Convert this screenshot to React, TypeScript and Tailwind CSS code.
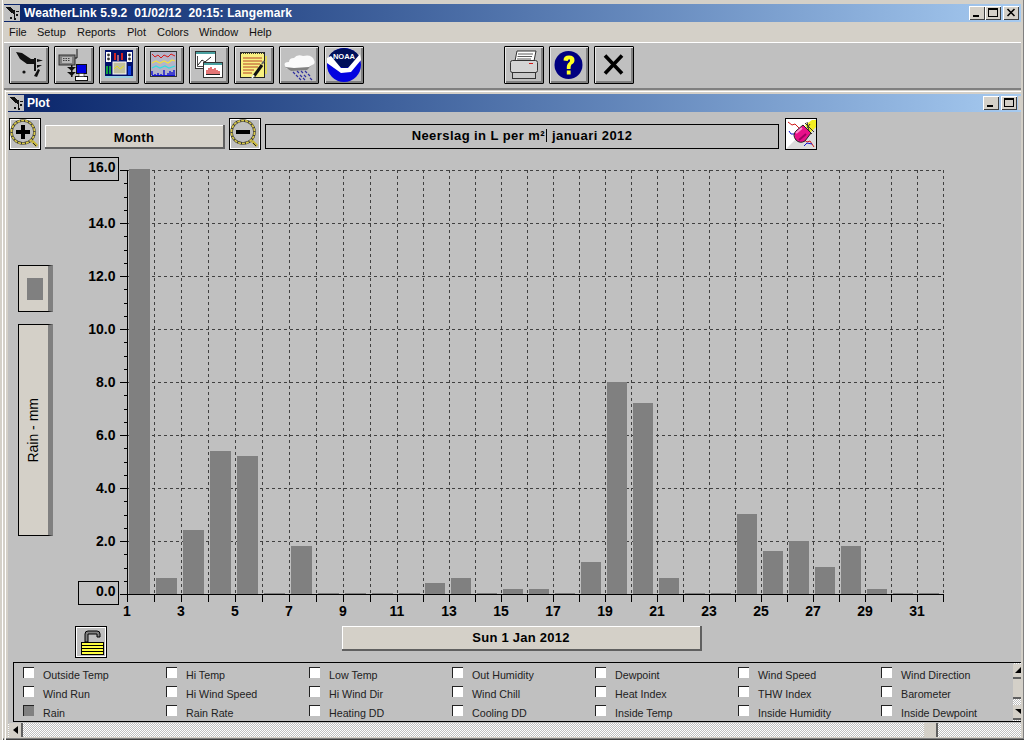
import React from "react";

const LEFT_BAR = [16.04,0.6,2.4,5.4,5.2,0,1.8,0,0,0,0,0.4,0.6,0,0.2,0.2,0,1.2,8,7.2,0.6,0,0,3.02,1.62,2,1.02,1.8,0.2,0,0];
const tick = (d: number) => (d <= 11 ? 127 + 27 * (d - 1) : 397 + 26 * (d - 11));
const yv = (v: number) => Math.round(594 - v * 26.5);

function Vane() {
  return (
    <svg viewBox="0 0 16 16" className="w-[16px] h-[16px] bg-[#c0c0c0]" shapeRendering="crispEdges">
      <polygon points="2,2 6,2 11,6 11,9 7,8" fill="#111" />
      <rect x="10" y="5" width="1" height="8" fill="#111" />
      <rect x="12" y="6" width="3" height="1" fill="#111" />
      <rect x="12" y="9" width="2" height="2" fill="#111" />
      <rect x="6" y="12" width="2" height="2" fill="#111" />
      <rect x="10" y="13" width="2" height="2" fill="#111" />
    </svg>
  );
}

function ToolBtn({ children }: { children: React.ReactNode }) {
  return (
    <div className="w-[40px] h-[38px] shrink-0 bg-[#c0c0c0] border border-black rounded-[1px] shadow-[inset_1px_1px_0_#e8e8e8,inset_-2px_-2px_0_#808080]">
      <svg viewBox="1 1 38 36" className="w-[38px] h-[36px]">{children}</svg>
    </div>
  );
}

function WinBtn({ kind }: { kind: "min" | "max" | "close" }) {
  return (
    <div className="w-[16px] h-[14px] bg-[#d4d0c8] shadow-[inset_1px_1px_0_#fff,inset_-1px_-1px_0_#404040]">
      <svg viewBox="0 0 16 14" className="w-[16px] h-[14px]" shapeRendering="crispEdges">
        {kind === "min" && <rect x="4" y="9" width="6" height="2" fill="#000" />}
        {kind === "max" && (
          <>
            <rect x="3.5" y="2.5" width="9" height="8" fill="none" stroke="#000" />
            <rect x="3" y="2" width="10" height="2" fill="#000" />
          </>
        )}
        {kind === "close" && (
          <path d="M4.5 3 L11.5 10 M11.5 3 L4.5 10" stroke="#000" strokeWidth="1.6" shapeRendering="auto" />
        )}
      </svg>
    </div>
  );
}

function Magnifier({ minus }: { minus?: boolean }) {
  return (
    <div className="w-[32px] h-[32px] shrink-0 border border-black shadow-[inset_1px_1px_0_#fff,inset_-1px_-1px_0_#fff] bg-[#c0c0c0]">
      <svg viewBox="0 0 30 30" className="w-[30px] h-[30px]">
        <circle cx="13" cy="13" r="11.5" fill="#c0c0c0" stroke="#333" strokeWidth="2.6" />
        <circle cx="13" cy="13" r="11.5" fill="none" stroke="#d8c848" strokeWidth="1.7" strokeDasharray="3 1" />
        <rect x="6" y="11" width="14" height="4" fill="#000" />
        {!minus && <rect x="11" y="6" width="4" height="14" fill="#000" />}
        <path d="M22 22 L27 27" stroke="#c8b838" strokeWidth="3" />
        <path d="M23 24 L26 27" stroke="#222" strokeWidth="1" />
      </svg>
    </div>
  );
}

function Eraser() {
  return (
    <div className="w-[32px] h-[32px] shrink-0 border border-black bg-white">
      <svg viewBox="0 0 30 30" className="w-[30px] h-[30px]">
        <polygon points="0,0 30,0 0,30" fill="#fff" />
        <polygon points="30,0 30,30 0,30" fill="#dcdcdc" />
        <path d="M2 3 L6 6 L9 5 L14 10 M17 20 L21 23 L24 22 L28 28" fill="none" stroke="#d01818" strokeWidth="1" />
        <path d="M3 12 L5 15 L9 15 M18 27 L21 24 L26 25" fill="none" stroke="#1010d0" strokeWidth="1" />
        <polygon points="19,6 26,1 30,1 30,8 24,14" fill="#f4ee20" />
        <path d="M17 6 L26 15 M19 4 L28 13 M21 3 L23 12 M24 5 L21 9" stroke="#333" strokeWidth="1" />
        <path d="M10 12 L17 6 L25 14 L19 22 Q14 25 10 21 Q6 16 10 12 Z" fill="#e8108a" stroke="#222" strokeWidth="1" />
        <path d="M10 14 L16 9" stroke="#ff90d0" strokeWidth="2" />
        <path d="M13 21 L20 15" stroke="#a00060" strokeWidth="2" />
      </svg>
    </div>
  );
}

function Lock() {
  return (
    <div className="w-[32px] h-[32px] border border-black bg-[#c0c0c0] shadow-[inset_1px_1px_0_#fff,inset_-1px_-1px_0_#fff]">
      <svg viewBox="0 0 30 30" className="w-[30px] h-[30px]" shapeRendering="crispEdges">
        <path d="M9 15 V7 Q9 4 12 4 H21 Q24 4 24 7 V10 H21 V7 H12 V15 Z" fill="#808080" stroke="#000" strokeWidth="1" shapeRendering="auto" />
        <rect x="5.5" y="15.5" width="22" height="12" fill="#ffff40" stroke="#000" />
        <rect x="6" y="18" width="21" height="1" fill="#000" />
        <rect x="6" y="21" width="21" height="1" fill="#000" />
        <rect x="6" y="24" width="21" height="1" fill="#000" />
      </svg>
    </div>
  );
}

function Tri({ dir }: { dir: "up" | "down" | "left" }) {
  const pts = dir === "up" ? "0,6 6,6 6,0" : dir === "down" ? "0,1 6,1 6,6" : "6,0 6,8 1,4";
  return (
    <svg viewBox="0 0 6 8" className="w-[6px] h-[8px] shrink-0">
      <polygon points={pts} fill="#000" />
    </svg>
  );
}

const menus: [string, string][] = [
  ["File", "w-[28px]"],
  ["Setup", "w-[40px]"],
  ["Reports", "w-[50px]"],
  ["Plot", "w-[30px]"],
  ["Colors", "w-[42px]"],
  ["Window", "w-[50px]"],
  ["Help", "w-[30px]"],
];

const legend = [
  "Outside Temp", "Hi Temp", "Low Temp", "Out Humidity", "Dewpoint", "Wind Speed", "Wind Direction",
  "Wind Run", "Hi Wind Speed", "Hi Wind Dir", "Wind Chill", "Heat Index", "THW Index", "Barometer",
  "Rain", "Rain Rate", "Heating DD", "Cooling DD", "Inside Temp", "Inside Humidity", "Inside Dewpoint",
];

function Chart() {
  const days = Array.from({ length: 32 }, (_, i) => i + 1);
  const majors = [0, 2, 4, 6, 8, 10, 12, 14, 16];
  const minors = Array.from({ length: 33 }, (_, i) => i * 0.5);
  return (
    <svg viewBox="60 150 900 476" className="w-[900px] h-[476px] block" style={{ fontFamily: "'Liberation Sans', sans-serif" }}>
      <g shapeRendering="crispEdges" stroke="#404040" strokeWidth="1" strokeDasharray="3 3">
        {days.slice(1).map((d) => (
          <line key={d} x1={tick(d) + 0.5} x2={tick(d) + 0.5} y1={170} y2={594} />
        ))}
        {majors.slice(1).map((v) => (
          <line key={v} x1={128} x2={943} y1={yv(v) + 0.5} y2={yv(v) + 0.5} />
        ))}
      </g>
      <g shapeRendering="crispEdges" fill="#808080">
        {LEFT_BAR.map((v, i) => {
          const d = i + 1;
          const top = v === 0 ? 593 : yv(v);
          return <rect key={d} x={tick(d) + 2} y={top} width={d <= 11 ? 21 : 20} height={594 - top} />;
        })}
      </g>
      <g shapeRendering="crispEdges" stroke="#000" strokeWidth="1">
        <line x1={127.5} x2={127.5} y1={170} y2={595} />
        <line x1={120} x2={944} y1={594.5} y2={594.5} />
        {minors.map((v) => (
          <line key={v} x1={v % 2 === 0 ? 120 : 124} x2={128} y1={yv(v) + 0.5} y2={yv(v) + 0.5} />
        ))}
        {days.map((d) => (
          <line key={d} x1={tick(d) + 0.5} x2={tick(d) + 0.5} y1={594} y2={602} />
        ))}
        <rect x={70.5} y={157.5} width={48} height={23} fill="none" />
        <rect x={78.5} y={581.5} width={40} height={23} fill="none" />
      </g>
      <g fontSize="14" fontWeight="700" fill="#000">
        {majors.map((v) => (
          <text key={v} x={115.5} y={v === 16 ? 172 : v === 0 ? 596 : yv(v) + 5} textAnchor="end">
            {v.toFixed(1)}
          </text>
        ))}
        {days.filter((d) => d % 2 === 1).map((d) => (
          <text key={d} x={tick(d)} y={616} textAnchor="middle">
            {d}
          </text>
        ))}
      </g>
    </svg>
  );
}

export default function App() {
  return (
    <div className="relative w-[1024px] h-[740px] overflow-hidden bg-[#d4d0c8] flex flex-col pt-[4px] pl-[4px] pr-[3px] font-['Liberation_Sans',sans-serif] text-black shadow-[inset_2px_0_0_#d4d0c8,inset_3px_0_0_#fff,inset_0_-1px_0_#404040,inset_0_-2px_0_#808080,inset_-1px_0_0_#808080]">
      {/* Title bar */}
      <div className="h-[18px] shrink-0 flex items-center bg-gradient-to-r from-[#0a246a] to-[#a6caf0] pr-[2px]">
        <Vane />
        <div className="ml-[4px] flex-1 text-white font-bold text-[12px] tracking-[0.09px] whitespace-pre leading-none">WeatherLink 5.9.2  01/02/12  20:15: Langemark</div>
        <WinBtn kind="min" />
        <WinBtn kind="max" />
        <div className="ml-[2px]"><WinBtn kind="close" /></div>
      </div>
      {/* Menu */}
      <div className="h-[20px] shrink-0 flex items-center pl-[5px] text-[11px] text-[#111]">
        {menus.map(([m, w]) => (
          <div key={m} className={w}>{m}</div>
        ))}
      </div>
      {/* Toolbar */}
      <div className="h-[46px] shrink-0 border-t border-white bg-[#c0c0c0] pt-[3px] pl-[5px] flex gap-[5px]">
        <ToolBtn>
          <polygon points="7,6 13,7 22,13 26,13 26,18 18,18 11,13" fill="#111" />
          <rect x="25" y="12" width="2" height="13" fill="#111" />
          <polygon points="28,13 34,14.5 28,16" fill="#111" />
          <polygon points="28,19 33,19 28,22" fill="#111" />
          <circle cx="15" cy="26" r="1.6" fill="#111" />
          <polygon points="25,30 29,23 31,24 28,31" fill="#111" />
        </ToolBtn>
        <ToolBtn>
          <rect x="5" y="9" width="16" height="10" fill="#808080" stroke="#333" />
          <rect x="8" y="11" width="10" height="6" fill="#b8b8b8" />
          <path d="M9 12.5 H16 M9 14.5 H16" stroke="#222" strokeWidth="0.8" strokeDasharray="1.5 1" />
          <path d="M21 12 H23 V3" fill="none" stroke="#111" />
          <rect x="17" y="19" width="1.5" height="12" fill="#111" />
          <polygon points="13,21 22,21 17.7,25" fill="#111" />
          <polygon points="13,26 22,26 17.7,30" fill="#111" />
          <rect x="22.5" y="18.5" width="10" height="9" fill="#0000e0" stroke="#111" />
          <rect x="21.5" y="30.5" width="12" height="4" fill="#fff" stroke="#111" />
          <rect x="25" y="27.5" width="5" height="3" fill="#fff" stroke="#111" strokeWidth="0.6" />
        </ToolBtn>
        <ToolBtn>
          <rect x="6" y="4" width="28" height="28" fill="#00106a" />
          <rect x="7" y="6" width="5" height="10" fill="#fff" />
          <circle cx="9.5" cy="9" r="1.4" fill="#333" />
          <circle cx="9.5" cy="13" r="1.4" fill="#333" />
          <rect x="28" y="6" width="5" height="10" fill="#fff" />
          <circle cx="30.5" cy="9" r="1.4" fill="#333" />
          <circle cx="30.5" cy="13" r="1.4" fill="#333" />
          <rect x="15" y="7" width="2" height="7" fill="#d02020" />
          <rect x="18" y="9" width="2" height="6" fill="#a06080" />
          <rect x="22" y="7" width="2" height="7" fill="#d02020" />
          <rect x="7" y="20" width="2" height="8" fill="#10a040" />
          <rect x="10" y="20" width="2" height="8" fill="#10a040" />
          <rect x="29" y="20" width="3" height="9" fill="#1040e0" />
          <rect x="14" y="16" width="13" height="12" fill="#c0c0a0" stroke="#fff" />
          <path d="M15 23 L18 20 L21 23 L25 20" stroke="#e0e020" fill="none" />
          <rect x="6" y="30" width="28" height="2" fill="#9ad0e0" />
        </ToolBtn>
        <ToolBtn>
          <rect x="6.5" y="5.5" width="26" height="25" fill="#b4b4c8" stroke="#333" />
          <path d="M8 8 L11 11 L14 9 L17 12 L20 9 L24 11 L27 8 L31 10" fill="none" stroke="#d81818" />
          <path d="M8 17 L12 15 L16 17 L20 15 L24 17 L28 14 L31 15" fill="none" stroke="#f0e040" strokeWidth="1.3" />
          <path d="M8 22 L12 20 L16 22 L21 20 L25 22 L31 20" fill="none" stroke="#30e0e0" strokeWidth="1.3" />
          <path d="M8 25 V29 M11 28 V29 M14 27 V29 M17 28 V29 M20 24 V29 M24 27 V29 M26 25 V29 M28 26 V29 M30 24 V29" stroke="#1010d0" strokeWidth="1.4" />
          <rect x="8" y="29" width="23" height="1" fill="#1010d0" />
        </ToolBtn>
        <ToolBtn>
          <rect x="6.5" y="5.5" width="20" height="17" fill="#fff" stroke="#333" />
          <rect x="7" y="6" width="19" height="2" fill="#4aa0a0" />
          <path d="M9 19 L13 14 L16 16 L22 11" fill="none" stroke="#222" />
          <path d="M8.5 10 V20.5 H24" fill="none" stroke="#222" strokeWidth="0.8" />
          <rect x="14.5" y="16.5" width="19" height="15" fill="#fff" stroke="#333" />
          <rect x="15" y="17" width="18" height="2" fill="#4aa0a0" />
          <path d="M18 28 V24 M20 28 V22 M22 28 V21 M24 28 V23 M26 28 V22 M28 28 V24 M30 28 V25" stroke="#d01818" strokeWidth="1.2" />
          <rect x="17" y="28" width="14" height="1" fill="#222" />
        </ToolBtn>
        <ToolBtn>
          <rect x="30" y="10" width="3" height="18" fill="#e0d860" />
          <rect x="6.5" y="6.5" width="24" height="25" fill="#f8f080" stroke="#222" />
          <path d="M7 7 H30" stroke="#333" strokeWidth="2" strokeDasharray="1 1" />
          <path d="M9 12 H28 M9 15 H28 M9 18 H26 M9 21 H24 M9 24 H20 M9 27 H18" stroke="#b03020" strokeWidth="0.9" />
          <path d="M20 30 L28 19" stroke="#111" strokeWidth="3" />
          <path d="M18 32 L20 29" stroke="#f0f0f0" strokeWidth="1.5" />
          <path d="M28 18 L30 15" stroke="#666" strokeWidth="2" />
        </ToolBtn>
        <ToolBtn>
          <path d="M6 20 Q4 16 10 16 Q10 12 15 12 Q18 8 24 10 Q33 8 35 14 Q37 18 33 19 L30 22 L8 23 Z" fill="#fafafa" />
          <path d="M6 21 L15 22 L30 21 L33 19 L28 24 L12 25 Z" fill="#808080" />
          <path d="M14 26 L16 28 M18 25 L20 27 M22 25 L24 27 M26 25 L28 27 M17 29 L19 31 M21 29 L23 31 M25 29 L27 31 M29 28 L31 30 M20 32 L22 34 M24 32 L26 34 M31 32 L33 34" stroke="#3030a0" strokeWidth="1.2" />
        </ToolBtn>
        <ToolBtn>
          <circle cx="20" cy="19" r="17" fill="#0404e0" />
          <path d="M5 10 Q9 3 20 2 Q31 3 35 10 L26 21 L20 22 L13 20 Z" fill="#00105a" />
          <polygon points="3,12 7,10 17,22 24,22 36,8 37,14 27,26 17,27 3,17" fill="#fff" />
          <text x="20" y="13" textAnchor="middle" fontSize="7.5" fontWeight="700" fill="#fff" fontFamily="'Liberation Sans', sans-serif">NOAA</text>
        </ToolBtn>
        <div className="w-[130px] shrink-0" />
        <ToolBtn>
          <polygon points="13,5 32,5 30,15 11,15" fill="#fff" stroke="#333" />
          <path d="M14 8 H29 M13.5 10.5 H28 M13 13 H27" stroke="#333" strokeWidth="0.8" />
          <rect x="6.5" y="14.5" width="27" height="12" rx="2" fill="#d4d4d4" stroke="#333" />
          <rect x="25" y="17" width="4" height="1" fill="#d01818" />
          <rect x="8.5" y="26.5" width="23" height="6" fill="#c8c8c8" stroke="#333" />
        </ToolBtn>
        <ToolBtn>
          <circle cx="19.5" cy="19" r="14" fill="#000080" />
          <path d="M14.5 14.5 Q14.5 9.5 20 9.5 Q25.5 9.5 25.5 14 Q25.5 17 22.5 18.5 Q21.5 19.5 21.5 23 H17.8 Q17.5 18 20 16.5 Q21.8 15 20.8 13.5 Q19.5 12.5 18.6 15 Z" fill="#ffff20" />
          <rect x="17.8" y="24.5" width="3.8" height="4" fill="#ffff20" />
        </ToolBtn>
        <ToolBtn>
          <path d="M11 9.5 L28 27.5 M28 9.5 L11 27.5" stroke="#000" strokeWidth="3.6" />
        </ToolBtn>
      </div>
      <div className="h-[2px] shrink-0 bg-[#808080]" />
      {/* Child window */}
      <div className="flex-1 min-h-0 flex flex-col pt-[4px] pl-[4px] shadow-[inset_1px_0_0_#d4d0c8,inset_2px_0_0_#fff,inset_0_1px_0_#d4d0c8,inset_0_2px_0_#fff]">
        <div className="h-[18px] shrink-0 flex items-center bg-gradient-to-r from-[#0a246a] to-[#a6caf0]">
          <Vane />
          <div className="ml-[3px] flex-1 text-white font-bold text-[12px] leading-none">Plot</div>
          <WinBtn kind="min" />
          <div className="ml-[2px]"><WinBtn kind="max" /></div>
          <div className="ml-[1px] w-[3px] h-[14px] overflow-hidden bg-[#d4d0c8]" />
        </div>
        <div className="flex-1 min-h-0 bg-[#c0c0c0] pt-[6px] flex flex-col mb-[3px]">
          {/* Top row */}
          <div className="h-[32px] shrink-0 flex items-end pl-[1px]">
            <Magnifier />
            <div className="ml-[4px] w-[180px] h-[24px] mb-[1px] pt-[3px] bg-[#d4d0c8] border-r-2 border-b-2 border-[#606060] shadow-[inset_1px_1px_0_#fff] flex items-center justify-center font-bold text-[13px] tracking-[0.3px]">Month</div>
            <div className="ml-[4px]"><Magnifier minus /></div>
            <div className="ml-[4px] w-[514px] h-[25px] mb-[1px] pb-[2px] border border-black flex items-center justify-center font-bold text-[13px] tracking-[0.43px] whitespace-pre">
              Neerslag in L per m²<span className="inline-block w-px h-[13px] bg-black mx-[1px]" /> januari 2012
            </div>
            <div className="ml-[6px]"><Eraser /></div>
          </div>
          {/* Middle row */}
          <div className="h-[476px] shrink-0 flex">
            <div className="ml-[10px] w-[35px] pt-[115px] flex flex-col gap-[12px]">
              <div className="h-[47px] border border-black bg-[#d4d0c8] border-r-[5px] border-r-[#808080] flex items-center justify-center">
                <div className="w-[16px] h-[22px] bg-[#808080] ml-[2px]" />
              </div>
              <div className="h-[212px] border border-black bg-[#d4d0c8] border-r-[5px] border-r-[#808080] flex items-center justify-center">
                <span className="[writing-mode:vertical-rl] rotate-180 text-[14px]">Rain - mm</span>
              </div>
            </div>
            <div className="ml-[7px]"><Chart /></div>
          </div>
          {/* Bottom row */}
          <div className="h-[32px] shrink-0 flex items-start pl-[67px]">
            <Lock />
            <div className="ml-[235px] w-[360px] h-[25px] pt-[1px] bg-[#d4d0c8] border-r-2 border-b-2 border-[#606060] shadow-[inset_1px_1px_0_#fff] flex items-center justify-center font-bold text-[13px] tracking-[0.25px]">Sun 1 Jan 2012</div>
          </div>
          {/* Legend */}
          <div className="mt-[4px] ml-[5px] h-[60px] shrink-0 border-l border-t border-b border-black flex">
            <div className="flex-1 min-w-0 overflow-hidden grid grid-cols-[repeat(7,143px)] auto-rows-[19px] pl-[9px] pt-[4px]">
              {legend.map((l) => (
                <div key={l} className="flex items-start">
                  <div className={l === "Rain" ? "w-[11px] h-[11px] bg-[#808080] border-t border-l border-[#222]" : "w-[11px] h-[11px] bg-white border-t border-l border-[#222]"} />
                  <div className="ml-[9px] pt-[1px] text-[10.7px] leading-[14px] text-[#222] whitespace-nowrap">{l}</div>
                </div>
              ))}
            </div>
            <div className="w-[8px] shrink-0 pt-[1px] pb-[1px] flex flex-col bg-[repeating-conic-gradient(#fff_0_25%,#c0c0c0_0_50%)] bg-[length:2px_2px]">
              <div className="h-[15px] bg-[#d4d0c8] border-b-2 border-[#606060] flex items-center justify-end overflow-hidden"><Tri dir="up" /></div>
              <div className="h-[20px] bg-[#d4d0c8] border-b-2 border-[#606060]" />
              <div className="flex-1" />
              <div className="h-[15px] bg-[#d4d0c8] border-b-2 border-[#606060] flex items-center justify-end overflow-hidden"><Tri dir="down" /></div>
            </div>
          </div>
          {/* H scrollbar */}
          <div className="mt-[1px] h-[14px] shrink-0 flex bg-[repeating-conic-gradient(#fff_0_25%,#c0c0c0_0_50%)] bg-[length:2px_2px] pl-[1px]">
            <div className="w-[14px] h-[14px] bg-[#d4d0c8] border-r-2 border-[#606060] flex items-center justify-center"><Tri dir="left" /></div>
            <div className="ml-[901px] w-[14px] h-[14px] bg-[#d4d0c8] border-r-2 border-[#606060]" />
          </div>
        </div>
      </div>
    </div>
  );
}
